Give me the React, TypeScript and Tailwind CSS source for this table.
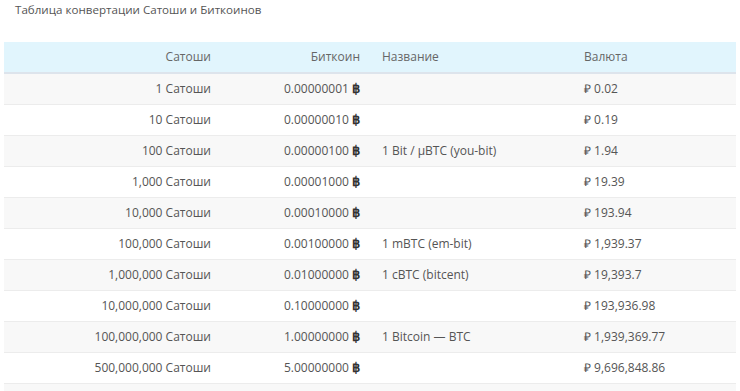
import React from 'react'

const rows = [
  ['1 Сатоши', '0.00000001', '', '₽ 0.02'],
  ['10 Сатоши', '0.00000010', '', '₽ 0.19'],
  ['100 Сатоши', '0.00000100', '1 Bit / μBTC (you-bit)', '₽ 1.94'],
  ['1,000 Сатоши', '0.00001000', '', '₽ 19.39'],
  ['10,000 Сатоши', '0.00010000', '', '₽ 193.94'],
  ['100,000 Сатоши', '0.00100000', '1 mBTC (em-bit)', '₽ 1,939.37'],
  ['1,000,000 Сатоши', '0.01000000', '1 cBTC (bitcent)', '₽ 19,393.7'],
  ['10,000,000 Сатоши', '0.10000000', '', '₽ 193,936.98'],
  ['100,000,000 Сатоши', '1.00000000', '1 Bitcoin — BTC', '₽ 1,939,369.77'],
  ['500,000,000 Сатоши', '5.00000000', '', '₽ 9,696,848.86'],
]

export default function App() {
  return (
    <div className="w-[740px] h-[391px] overflow-hidden bg-white font-['Open_Sans',sans-serif] text-[12px] text-[#555]">
      <h1 className="pl-[15px] pt-[1px] h-[42px] text-[11.6px] font-normal text-[#555]">
        Таблица конвертации Сатоши и Биткоинов
      </h1>
      <table className="ml-[4px] w-[732px] border-collapse table-fixed">
        <colgroup>
          <col className="w-[214px]" />
          <col className="w-[148px]" />
          <col className="w-[210px]" />
          <col />
        </colgroup>
        <thead>
          <tr className="h-[31px] bg-[#e1f5fd] border-b-2 border-[#dde4ec] text-[#666]">
            <th className="font-normal text-right pr-[7px]">Сатоши</th>
            <th className="font-normal text-right pr-[6px]">Биткоин</th>
            <th className="font-normal text-left pl-[16px]">Название</th>
            <th className="font-normal text-left pl-[8px]">Валюта</th>
          </tr>
        </thead>
        <tbody>
          {rows.map((r, i) => (
            <tr key={r[0]} className={`h-[31px] border-b border-[#ececec] ${i % 2 === 0 ? 'bg-[#f8f8f8]' : 'bg-white'}`}>
              <td className="text-right pr-[7px]">{r[0]}</td>
              <td className="text-right pr-[6px]">
                {r[1]} <span className="font-bold text-[13px] text-[#333]">฿</span>
              </td>
              <td className="text-left pl-[16px]">{r[2]}</td>
              <td className="text-left pl-[8px]">{r[3]}</td>
            </tr>
          ))}
          <tr className="h-[31px] bg-[#f8f8f8]">
            <td colSpan={4}></td>
          </tr>
        </tbody>
      </table>
    </div>
  )
}
